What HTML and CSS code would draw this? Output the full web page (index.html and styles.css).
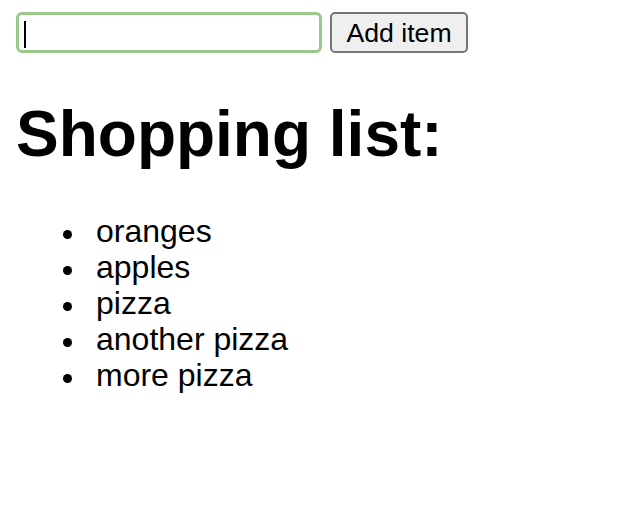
FILE: index.html
```html
<!DOCTYPE html>
<html>
<head>
<meta charset="utf-8">
<link rel="stylesheet" href="styles.css">
</head>
<body>
<div class="page">
  <form class="add-form">
    <div class="field"><input class="item-input" type="text" aria-label="Item"></div>
    <button class="add-btn" type="button">Add item</button>
  </form>
  <h1 class="title">Shopping list:</h1>
  <ul class="list">
    <li class="item">oranges</li>
    <li class="item">apples</li>
    <li class="item">pizza</li>
    <li class="item">another pizza</li>
    <li class="item">more pizza</li>
  </ul>
</div>
</body>
</html>
```
FILE: styles.css
```css
html, body {
  margin: 0;
  background: #ffffff;
}
.page {
  padding: 12px 16px;
  font-family: "Liberation Sans", Arial, sans-serif;
  color: #000;
}
.add-form {
  display: flex;
  gap: 8px;
  margin: 0;
}
.field {
  position: relative;
  width: 306px;
  height: 41px;
  box-sizing: border-box;
  border: 3px solid #9cc78b;
  border-radius: 6px;
  background: #fff;
}
.field::after {
  content: "";
  position: absolute;
  left: 5px;
  top: 6px;
  width: 2px;
  height: 27px;
  background: #000;
}
.item-input {
  width: 100%;
  height: 100%;
  box-sizing: border-box;
  border: 0;
  outline: none;
  padding: 0 6px;
  font: 26.67px "Liberation Sans", Arial, sans-serif;
  background: transparent;
  caret-color: transparent;
}
.add-btn {
  width: 138px;
  height: 41px;
  box-sizing: border-box;
  border: 2px solid #767676;
  border-radius: 5px;
  background: #efefef;
  font: 26.67px "Liberation Sans", Arial, sans-serif;
  color: #000;
  padding: 2px 0 0;
}
.title {
  font-size: 64px;
  font-weight: bold;
  line-height: 74px;
  margin: 44px 0 0;
}
.list {
  margin: 42px 0 0;
  padding-left: 80px;
  font-size: 32px;
  line-height: 36px;
  list-style: none;
}
.item::before {
  content: "";
  display: inline-block;
  width: 9px;
  height: 9px;
  border-radius: 50%;
  background: #000;
  margin-left: -33px;
  margin-right: 24px;
  vertical-align: 3px;
}
```
